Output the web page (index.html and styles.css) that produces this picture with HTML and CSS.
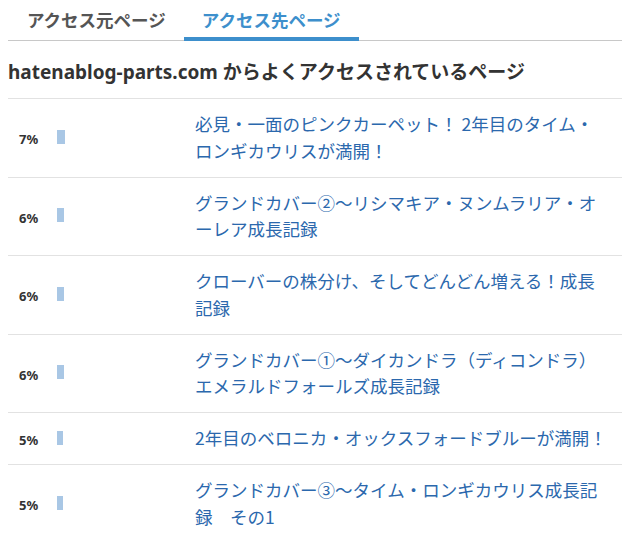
FILE: index.html
```html
<!DOCTYPE html>
<html lang="ja">
<head>
<meta charset="utf-8">
<title>アクセス先ページ</title>
<link rel="stylesheet" href="styles.css">
</head>
<body>
<div class="panel">
  <nav class="tabs">
    <a class="tab" href="#">アクセス元ページ</a>
    <a class="tab is-active" href="#">アクセス先ページ</a>
  </nav>
  <h2 class="title">hatenablog-parts.com からよくアクセスされているページ</h2>
  <ul class="ranking">
    <li class="row">
      <div class="stat"><span class="pct">7%</span><span class="track"><span class="bar" style="width:7%"></span></span></div>
      <a class="link" href="#">必見・一面のピンクカーペット！ 2年目のタイム・ロンギカウリスが満開！</a>
    </li>
    <li class="row">
      <div class="stat"><span class="pct">6%</span><span class="track"><span class="bar" style="width:6%"></span></span></div>
      <a class="link" href="#">グランドカバー②～リシマキア・ヌンムラリア・オーレア成長記録</a>
    </li>
    <li class="row">
      <div class="stat"><span class="pct">6%</span><span class="track"><span class="bar" style="width:6%"></span></span></div>
      <a class="link" href="#">クローバーの株分け、そしてどんどん増える！成長記録</a>
    </li>
    <li class="row">
      <div class="stat"><span class="pct">6%</span><span class="track"><span class="bar" style="width:6%"></span></span></div>
      <a class="link" href="#">グランドカバー①～ダイカンドラ（ディコンドラ）エメラルドフォールズ成長記録</a>
    </li>
    <li class="row">
      <div class="stat"><span class="pct">5%</span><span class="track"><span class="bar" style="width:5%"></span></span></div>
      <a class="link" href="#">2年目のベロニカ・オックスフォードブルーが満開！</a>
    </li>
    <li class="row">
      <div class="stat"><span class="pct">5%</span><span class="track"><span class="bar" style="width:5%"></span></span></div>
      <a class="link" href="#">グランドカバー③～タイム・ロンギカウリス成長記録　その1</a>
    </li>
  </ul>
</div>
</body>
</html>
```

FILE: styles.css
```css
html, body {
  margin: 0;
  padding: 0;
  background: #fff;
}

body {
  font-family: "Noto Sans", "Noto Sans CJK JP", sans-serif;
  color: #333;
}

.panel {
  margin: 0 3px 0 8px;
}

/* tab strip */
.tabs {
  display: flex;
  border-bottom: 1px solid #c8c8c8;
  padding-left: 1px;
}

.tab {
  display: block;
  padding: 7px 18px 4px;
  font-size: 17.5px;
  line-height: 26px;
  font-weight: bold;
  color: #555;
  text-decoration: none;
  border-bottom: 4px solid transparent;
  margin-bottom: -1px;
}

.tab.is-active {
  color: #3d8fcc;
  border-bottom-color: #3d8fcc;
}

/* heading */
.title {
  margin: 0;
  padding: 21px 0 16px;
  font-size: 19px;
  line-height: 20px;
  font-weight: bold;
  color: #333;
  border-bottom: 1px solid #e2e2e2;
}

/* ranking rows */
.ranking {
  list-style: none;
  margin: 0;
  padding: 0;
}

.row {
  display: flex;
  align-items: center;
  padding: 12.25px 13px 12.25px 11px;
  border-bottom: 1px solid #e2e2e2;
}

.stat {
  flex: 0 0 176px;
  display: flex;
  align-items: center;
  padding-top: 3px;
}

.pct {
  width: 38px;
  font-size: 13px;
  line-height: 16px;
  font-weight: bold;
  color: #333;
}

.track {
  display: block;
  width: 115px;
  height: 14px;
  margin-top: -5px;
}

.bar {
  display: block;
  height: 100%;
  background: #a9c7e5;
}

.link {
  flex: 1;
  font-family: "Noto Sans CJK JP", sans-serif;
  font-size: 17.5px;
  line-height: 26.5px;
  color: #2b68ad;
  text-decoration: none;
}
```
